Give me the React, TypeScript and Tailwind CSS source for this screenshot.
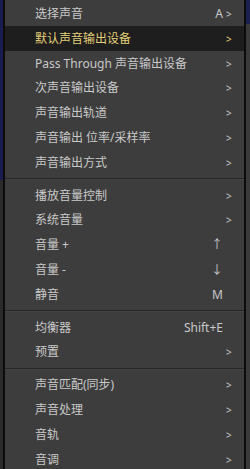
import React from 'react';

type Item = { label: string; key?: string; sub?: boolean; active?: boolean };

const groups: Item[][] = [
  [
    { label: '选择声音', key: 'A', sub: true },
    { label: '默认声音输出设备', sub: true, active: true },
    { label: 'Pass Through 声音输出设备', sub: true },
    { label: '次声音输出设备', sub: true },
    { label: '声音输出轨道', sub: true },
    { label: '声音输出 位率/采样率', sub: true },
    { label: '声音输出方式', sub: true },
  ],
  [
    { label: '播放音量控制', sub: true },
    { label: '系统音量', sub: true },
    { label: '音量 +', key: '↑' },
    { label: '音量 -', key: '↓' },
    { label: '静音', key: 'M' },
  ],
  [
    { label: '均衡器', key: 'Shift+E' },
    { label: '预置', sub: true },
  ],
  [
    { label: '声音匹配(同步)', sub: true },
    { label: '声音处理', sub: true },
    { label: '音轨', sub: true },
    { label: '音调', sub: true },
  ],
];

function Row({ item }: { item: Item }) {
  return (
    <div
      className={`flex items-center h-[24.8px] pl-[30px] pr-[12px] ${
        item.active ? 'bg-[#1e1e1e] text-[#e3cf78]' : 'text-[#c9c9c9]'
      }`}
    >
      <span className="flex-1 whitespace-nowrap">{item.label}</span>
      {item.key && <span className="mr-[3px] whitespace-nowrap">{item.key}</span>}
      <span className="w-[6px] text-[10px] leading-none">{item.sub ? '>' : ''}</span>
    </div>
  );
}

export default function App() {
  return (
    <div
      className="flex w-[250px] h-[469px] overflow-hidden bg-[#2c2c2c] text-[12px]"
      style={{ fontFamily: '"Noto Sans", "Noto Sans CJK SC", sans-serif' }}
    >
      {/* backdrop left */}
      <div className="flex flex-col w-[3px]">
        <div className="h-[180px] bg-[#181c4e]" />
        <div className="flex-1 bg-[#2a2a2a]" />
      </div>

      {/* menu */}
      <div className="flex-1 bg-[#3d3d3d] border-x-2 border-[#0c0c0c] pt-[1.6px]">
        {groups.map((g, i) => (
          <div key={i}>
            {i > 0 && (
              <div className="h-[8px] flex flex-col justify-center">
                <div className="h-px bg-[#252525]" />
                <div className="h-px bg-[#444444]" />
              </div>
            )}
            {g.map((item) => (
              <Row key={item.label} item={item} />
            ))}
          </div>
        ))}
      </div>

      {/* backdrop right */}
      <div className="flex flex-col w-[4px]">
        <div className="h-[24px] bg-[#1c2050]" />
        <div className="flex-1 bg-[#3a3a3a]" />
      </div>
    </div>
  );
}
